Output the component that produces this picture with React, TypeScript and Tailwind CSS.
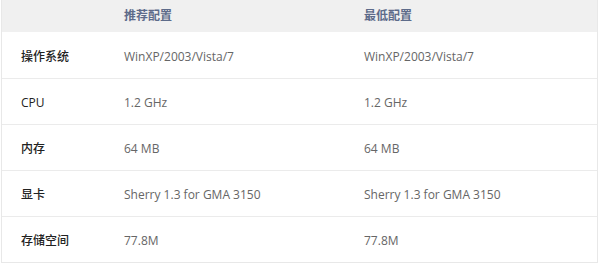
import React from "react";

type Row = { label: string; rec: string; min: string };

const rows: Row[] = [
  { label: "操作系统", rec: "WinXP/2003/Vista/7", min: "WinXP/2003/Vista/7" },
  { label: "CPU", rec: "1.2 GHz", min: "1.2 GHz" },
  { label: "内存", rec: "64 MB", min: "64 MB" },
  { label: "显卡", rec: "Sherry 1.3 for GMA 3150", min: "Sherry 1.3 for GMA 3150" },
  { label: "存储空间", rec: "77.8M", min: "77.8M" },
];

export default function App() {
  return (
    <div
      className="w-[600px] h-[269px] bg-white text-[12px]"
      style={{ fontFamily: '"Open Sans", "Noto Sans CJK SC", sans-serif' }}
    >
      <div className="ml-[1px] w-[597px] border-x border-b border-[#e8e8e8]">
        {/* header */}
        <div className="grid grid-cols-[122px_240px_1fr] h-[32px] items-center bg-[#f0f0f0] font-bold text-[#5d6b8a]">
          <div />
          <div>推荐配置</div>
          <div>最低配置</div>
        </div>
        {rows.map((r, i) => (
          <div
            key={r.label}
            className={`grid grid-cols-[122px_240px_1fr] h-[46px] items-center pt-[3px] ${
              i === 0 ? "" : "border-t border-[#ebebeb]"
            }`}
          >
            <div className="pl-[19px] text-[#222] font-medium">{r.label}</div>
            <div className="text-[#666]">{r.rec}</div>
            <div className="text-[#666]">{r.min}</div>
          </div>
        ))}
      </div>
    </div>
  );
}
